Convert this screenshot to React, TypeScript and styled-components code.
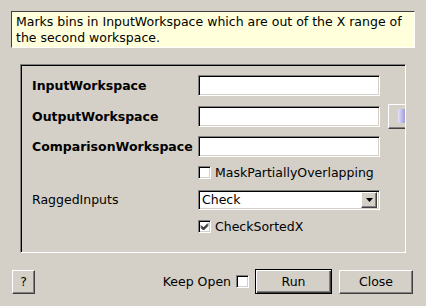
import React from 'react';
import styled, { createGlobalStyle, css } from 'styled-components';

const GlobalStyle = createGlobalStyle`
  html, body {
    margin: 0;
    padding: 0;
    background: #d4d0c8;
  }
  body {
    font-family: 'DejaVu Sans', 'Liberation Sans', sans-serif;
    font-size: 12.5px;
    color: #000;
  }
`;

const Dialog = styled.div`
  width: 426px;
  height: 306px;
  box-sizing: border-box;
  padding: 11px 11px 0 11px;
  display: flex;
  flex-direction: column;
  background: #d4d0c8;
  overflow: hidden;
`;

const Help = styled.div`
  height: 37px;
  box-sizing: border-box;
  padding: 2px 4px;
  background: #ffffdc;
  border-top: 1px solid #404040;
  border-left: 1px solid #404040;
  border-right: 1px solid #fff;
  border-bottom: 1px solid #fff;
  line-height: 16px;
`;

const Frame = styled.div`
  margin: 16px 9px 0 9px;
  height: 189px;
  box-sizing: border-box;
  border-top: 1px solid #808080;
  border-left: 1px solid #808080;
  border-right: 1px solid #fff;
  border-bottom: 1px solid #fff;
  box-shadow: inset 1px 1px 0 #000;
  padding: 10px 0 0 11px;
  overflow: hidden;
`;

const Form = styled.div`
  display: grid;
  grid-template-columns: 158px 182px 34px;
  grid-template-rows: 21px 22px 20px 15px 21px 14px;
  column-gap: 8px;
  row-gap: 9px;
  align-items: center;
`;

const Label = styled.div<{ $bold?: boolean }>`
  grid-column: 1;
  font-weight: ${({ $bold }) => ($bold ? 'bold' : 'normal')};
  white-space: nowrap;
`;

const sunken = css`
  box-sizing: border-box;
  background: #fff;
  border-top: 1px solid #808080;
  border-left: 1px solid #808080;
  border-right: 1px solid #fff;
  border-bottom: 1px solid #fff;
  box-shadow: inset 1px 1px 0 #000, inset -1px -1px 0 #d4d0c8;
`;

const Field = styled.div`
  ${sunken};
  grid-column: 2;
  height: 21px;
`;

const raised = css`
  box-sizing: border-box;
  background: #d4d0c8;
  border-top: 1px solid #fff;
  border-left: 1px solid #fff;
  border-right: 1px solid #404040;
  border-bottom: 1px solid #404040;
  box-shadow: inset -1px -1px 0 #808080;
`;

const BrowseButton = styled.div`
  ${raised};
  grid-column: 3;
  height: 25px;
  width: 34px;
  display: flex;
  align-items: center;
  justify-content: center;
`;

const CheckRow = styled.label`
  grid-column: 2 / span 2;
  display: flex;
  align-items: center;
  gap: 4px;
  white-space: nowrap;
`;

const Box = styled.span`
  ${sunken};
  width: 13px;
  height: 13px;
  display: inline-flex;
  align-items: center;
  justify-content: center;
  flex: none;
`;

const Combo = styled.div`
  ${sunken};
  grid-column: 2;
  height: 20px;
  display: flex;
  align-items: center;
  padding: 2px 2px 2px 3px;
`;

const ComboText = styled.span`
  flex: 1;
`;

const ComboArrow = styled.span`
  ${raised};
  width: 16px;
  height: 16px;
  display: flex;
  align-items: center;
  justify-content: center;
`;

const Footer = styled.div`
  display: flex;
  align-items: center;
  margin-top: 16px;
  padding: 0 2px 0 1px;
  gap: 6px;
`;

const Button = styled.button<{ $w: number; $default?: boolean }>`
  ${raised};
  font: inherit;
  color: #000;
  padding: 0;
  width: ${({ $w }) => $w}px;
  height: 24px;
  ${({ $default }) =>
    $default &&
    css`
      height: 25px;
      outline: none;
      border: 1px solid #000;
      box-shadow: inset 1px 1px 0 #fff, inset -1px -1px 0 #404040, inset -2px -2px 0 #808080;
    `}
`;

const Spacer = styled.div`
  flex: 1;
`;

const KeepOpen = styled.label`
  display: flex;
  align-items: center;
  gap: 5px;
`;

const Check = () => (
  <svg width="9" height="9" viewBox="0 0 9 9">
    <path d="M1 3.5 L3.5 6 L8 1.5 M1 4.5 L3.5 7 L8 2.5 M1 5.5 L3.5 8 L8 3.5" stroke="#000" strokeWidth="1" fill="none" />
  </svg>
);

const DocIcon = () => (
  <svg width="16" height="16" viewBox="0 0 16 16">
    <defs>
      <linearGradient id="dg" x1="0" x2="1" y1="0" y2="0">
        <stop offset="0" stopColor="#e4e2f8" />
        <stop offset="0.5" stopColor="#a8a4e0" />
        <stop offset="1" stopColor="#8a86d0" />
      </linearGradient>
    </defs>
    <rect x="1" y="1" width="12" height="14" rx="1" fill="url(#dg)" />
    <rect x="11" y="9" width="4" height="5" fill="#3fae3a" />
  </svg>
);

export default function App() {
  return (
    <>
      <GlobalStyle />
      <Dialog>
        <Help>
          Marks bins in InputWorkspace which are out of the X range of the second workspace.
        </Help>
        <Frame>
          <Form>
            <Label $bold>InputWorkspace</Label>
            <Field />

            <Label $bold>OutputWorkspace</Label>
            <Field />
            <BrowseButton>
              <DocIcon />
            </BrowseButton>

            <Label $bold>ComparisonWorkspace</Label>
            <Field />

            <CheckRow>
              <Box />
              MaskPartiallyOverlapping
            </CheckRow>

            <Label>RaggedInputs</Label>
            <Combo>
              <ComboText>Check</ComboText>
              <ComboArrow>
                <svg width="7" height="4" viewBox="0 0 7 4">
                  <path d="M0 0 H7 L3.5 4 Z" fill="#000" />
                </svg>
              </ComboArrow>
            </Combo>

            <CheckRow>
              <Box>
                <Check />
              </Box>
              CheckSortedX
            </CheckRow>
          </Form>
        </Frame>
        <Footer>
          <Button $w={23}>?</Button>
          <Spacer />
          <KeepOpen>
            Keep Open
            <Box />
          </KeepOpen>
          <Button $w={77} $default>
            Run
          </Button>
          <Button $w={74} style={{ marginLeft: 1 }}>
            Close
          </Button>
        </Footer>
      </Dialog>
    </>
  );
}
